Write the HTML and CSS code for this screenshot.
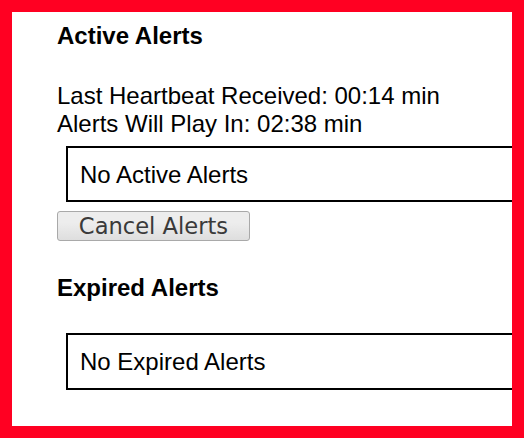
FILE: index.html
```html
<!DOCTYPE html>
<html>
<head>
<meta charset="utf-8">
<link rel="stylesheet" href="styles.css">
</head>
<body>
<div class="frame">
  <div class="content">
    <h2 class="heading">Active Alerts</h2>
    <div class="status">
      <div>Last Heartbeat Received: 00:14 min</div>
      <div>Alerts Will Play In: 02:38 min</div>
    </div>
    <div class="box box-active">No Active Alerts</div>
    <button class="cancel">Cancel Alerts</button>
    <h2 class="heading heading-expired">Expired Alerts</h2>
    <div class="box box-expired">No Expired Alerts</div>
  </div>
</div>
</body>
</html>
```

FILE: styles.css
```css
html, body {
  margin: 0;
  padding: 0;
  background: #ffffff;
}

.frame {
  width: 500px;
  height: 414px;
  border: 12px solid #ff0022;
  overflow: hidden;
  background: #ffffff;
  font-family: "Liberation Sans", Arial, sans-serif;
  font-size: 24px;
  color: #000000;
}

.content {
  padding: 10px 0 0 45px;
}

.heading {
  margin: 0;
  font-size: 24px;
  font-weight: bold;
  line-height: normal;
}

.status {
  margin-top: 32px;
}

.box {
  width: 600px;
  margin-left: 9px;
  border: 2px solid #000000;
  padding: 13px 12px 11px 12px;
}

.box-active {
  margin-top: 8px;
}

.cancel {
  display: block;
  margin: 9px 0 0 0;
  width: 193px;
  height: 30px;
  padding: 0;
  font-family: "DejaVu Sans", sans-serif;
  font-size: 22.6px;
  line-height: 26px;
  color: #3a3a3a;
  background: linear-gradient(#ededed, #ededed 38%, #dedede);
  border: 1px solid #a9a9a9;
  border-radius: 3px;
}

.heading-expired {
  margin-top: 33px;
}

.box-expired {
  margin-top: 31px;
  padding-bottom: 12px;
}
```
